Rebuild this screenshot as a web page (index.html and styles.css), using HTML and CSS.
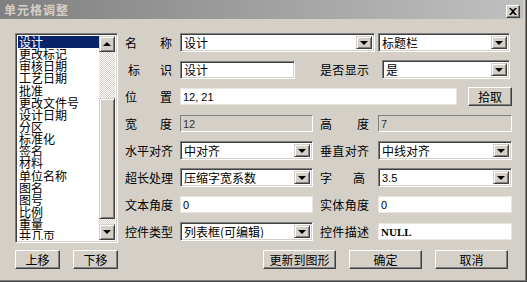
FILE: index.html
```html
<!DOCTYPE html>
<html lang="zh-CN">

<head>
    <meta charset="UTF-8">
    <meta name="viewport" content="width=device-width, initial-scale=1.0">
    <title>单元格调整</title>
    <link rel="stylesheet" href="styles.css">
</head>

<body>
    <div class="window">
        <div class="titlebar">
            <span class="title">单元格调整</span>
            <span class="close">
                <svg width="8" height="7" viewBox="0 0 8 7">
                    <path d="M0 0h2l2 2 2-2h2l-3 3.5 3 3.5h-2l-2-2-2 2h-2l3-3.5z" fill="#000"/>
                </svg>
            </span>
        </div>

        <div class="client">
            <div class="left">
                <div class="listbox">
                    <ul class="items">
                        <li class="selected">设计</li>
                        <li>更改标记</li>
                        <li>审核日期</li>
                        <li>工艺日期</li>
                        <li>批准</li>
                        <li>更改文件号</li>
                        <li>设计日期</li>
                        <li>分区</li>
                        <li>标准化</li>
                        <li>签名</li>
                        <li>材料</li>
                        <li>单位名称</li>
                        <li>图名</li>
                        <li>图号</li>
                        <li>比例</li>
                        <li>重量</li>
                        <li>共几页</li>
                        <li>第几页</li>
                    </ul>
                    <div class="scrollbar">
                        <div class="sb-btn"><span class="arrow-up"></span></div>
                        <div class="sb-track">
                            <div class="sb-thumb"></div>
                        </div>
                        <div class="sb-btn"><span class="arrow-down"></span></div>
                    </div>
                </div>
                <div class="left-buttons">
                    <button class="btn small">上移</button>
                    <button class="btn small">下移</button>
                </div>
            </div>

            <div class="form">
                <div class="row">
                    <label class="lbl">名称</label>
                    <div class="combo w-name"><span class="val">设计</span><span class="drop"><span class="arrow-down"></span></span></div>
                    <div class="combo w-type"><span class="val">标题栏</span><span class="drop"><span class="arrow-down"></span></span></div>
                </div>

                <div class="row">
                    <label class="lbl lbl-id">标识</label>
                    <div class="edit sunken w-id">设计</div>
                    <label class="lbl2 lbl-show">是否显示</label>
                    <div class="combo w-show"><span class="val">是</span><span class="drop"><span class="arrow-down"></span></span></div>
                </div>

                <div class="row">
                    <label class="lbl">位置</label>
                    <div class="edit w-pos latin">12, 21</div>
                    <button class="btn pick">拾取</button>
                </div>

                <div class="row">
                    <label class="lbl">宽度</label>
                    <div class="edit readonly w-half latin">12</div>
                    <label class="lbl2">高度</label>
                    <div class="edit readonly w-half2 latin">7</div>
                </div>

                <div class="row">
                    <label class="lbl">水平对齐</label>
                    <div class="combo w-half"><span class="val">中对齐</span><span class="drop"><span class="arrow-down"></span></span></div>
                    <label class="lbl2">垂直对齐</label>
                    <div class="combo w-half2"><span class="val">中线对齐</span><span class="drop"><span class="arrow-down"></span></span></div>
                </div>

                <div class="row">
                    <label class="lbl">超长处理</label>
                    <div class="combo w-half"><span class="val">压缩字宽系数</span><span class="drop"><span class="arrow-down"></span></span></div>
                    <label class="lbl2 lbl-wide">字高</label>
                    <div class="combo w-half2"><span class="val latin">3.5</span><span class="drop"><span class="arrow-down"></span></span></div>
                </div>

                <div class="row">
                    <label class="lbl">文本角度</label>
                    <div class="edit w-half latin">0</div>
                    <label class="lbl2">实体角度</label>
                    <div class="edit w-half2 latin">0</div>
                </div>

                <div class="row">
                    <label class="lbl">控件类型</label>
                    <div class="combo w-half"><span class="val">列表框(可编辑)</span><span class="drop"><span class="arrow-down"></span></span></div>
                    <label class="lbl2">控件描述</label>
                    <div class="edit w-half2 null">NULL</div>
                </div>

                <div class="actions">
                    <button class="btn wide">更新到图形</button>
                    <button class="btn wide">确定</button>
                    <button class="btn wide">取消</button>
                </div>
            </div>
        </div>
    </div>
</body>

</html>
```

FILE: styles.css
```css
body {
    margin: 0;
    font-family: "Noto Sans CJK SC", sans-serif;
    font-size: 12px;
}

.window {
    width: 527px;
    height: 282px;
    box-sizing: border-box;
    background: #d4d0c8;
    padding: 0 4px 4px 0;
    box-shadow: inset -1px -1px #404040, inset -2px -2px #808080;
    overflow: hidden;
}

.titlebar {
    height: 19px;
    display: flex;
    align-items: center;
    justify-content: space-between;
    padding: 0 3px 0 4px;
    background: linear-gradient(to right, #808080, #c0c0c0);
}

.title {
    color: #d4d0c8;
    font-weight: bold;
    font-size: 12px;
    letter-spacing: 1px;
}

.close {
    width: 14px;
    height: 13px;
    box-sizing: border-box;
    display: flex;
    align-items: center;
    justify-content: center;
    background: #d4d0c8;
    border: 1px solid;
    border-color: #fff #404040 #404040 #fff;
    box-shadow: inset -1px -1px #808080;
    margin-top: 4px;
}

.client {
    display: flex;
    padding: 14px 0 0 15px;
}

/* left list */
.left {
    width: 103px;
}

.listbox {
    height: 210px;
    box-sizing: border-box;
    display: flex;
    background: #fff;
    border: 1px solid;
    border-color: #808080 #fff #fff #808080;
    box-shadow: inset 1px 1px #404040, inset -1px -1px #d4d0c8;
    padding: 2px;
    overflow: hidden;
}

.items {
    list-style: none;
    margin: 0;
    padding: 0;
    flex: 1;
    overflow: hidden;
    line-height: 12.15px;
}

.items li {
    padding-left: 1px;
    height: 12.15px;
    white-space: nowrap;
}

.items .selected {
    background: #0a246a;
    color: #fff;
}

.scrollbar {
    width: 16px;
    display: flex;
    flex-direction: column;
}

.sb-btn {
    height: 16px;
    box-sizing: border-box;
    background: #d4d0c8;
    border: 1px solid;
    border-color: #d4d0c8 #404040 #404040 #d4d0c8;
    box-shadow: inset 1px 1px #fff, inset -1px -1px #808080;
    display: flex;
    align-items: center;
    justify-content: center;
}

.sb-track {
    flex: 1;
    background: repeating-conic-gradient(#fff 0 25%, #d4d0c8 0 50%) 0 0 / 2px 2px;
    padding-top: 46px;
}

.sb-thumb {
    height: 121px;
    box-sizing: border-box;
    background: #d4d0c8;
    border: 1px solid;
    border-color: #d4d0c8 #404040 #404040 #d4d0c8;
    box-shadow: inset 1px 1px #fff, inset -1px -1px #808080;
}

.arrow-up,
.arrow-down {
    width: 0;
    height: 0;
    border-left: 4px solid transparent;
    border-right: 4px solid transparent;
}

.arrow-up {
    border-bottom: 4px solid #000;
}

.arrow-down {
    border-top: 4px solid #000;
}

.left-buttons {
    display: flex;
    justify-content: space-between;
    margin-top: 7px;
}

/* buttons */
.btn {
    font-family: "Noto Sans CJK SC", sans-serif;
    font-size: 12px;
    line-height: 1;
    height: 19px;
    padding: 0;
    background: #d4d0c8;
    color: #000;
    border: 1px solid;
    border-color: #fff #404040 #404040 #fff;
    box-shadow: inset -1px -1px #808080;
}

.btn.small {
    width: 45px;
}

.btn.wide {
    width: 73px;
}

.btn.pick {
    width: 44px;
    margin-left: 11px;
}

/* form */
.form {
    margin-left: 5px;
    margin-top: -4px;
    width: 389px;
}

.row {
    height: 27px;
    display: flex;
    align-items: center;
}

.lbl {
    width: 57px;
    flex-shrink: 0;
    box-sizing: border-box;
    padding: 0 8px 0 2px;
    white-space: nowrap;
    text-align: justify;
    text-align-last: justify;
}

.lbl-id {
    padding-left: 5px;
}

.lbl2 {
    width: 58px;
    flex-shrink: 0;
    box-sizing: border-box;
    margin-left: 7px;
    padding-right: 9px;
    white-space: nowrap;
    text-align: justify;
    text-align-last: justify;
}

.lbl2.lbl-wide {
    padding-right: 13px;
}

.lbl-show {
    margin-left: 25px;
    width: 62px;
    padding-right: 13px;
}

.latin {
    font-family: "Liberation Sans", sans-serif;
    font-size: 11px;
}

.null {
    font-family: "Liberation Serif", serif;
    font-weight: bold;
    font-size: 11px;
}

.edit {
    height: 17px;
    flex-shrink: 0;
    box-sizing: border-box;
    background: #fff;
    border: 1px solid #e8e6e0;
    padding: 0 2px;
    display: flex;
    align-items: center;
    white-space: nowrap;
    overflow: hidden;
}

.edit.sunken {
    height: 18px;
    border-color: #808080 #fff #fff #808080;
    box-shadow: inset 1px 1px #404040, inset -1px -1px #d4d0c8;
    padding-left: 3px;
}

.edit.readonly {
    background: #d4d0c8;
    border-color: #808080 #fff #fff #808080;
    color: #333;
}

.combo {
    height: 19px;
    flex-shrink: 0;
    box-sizing: border-box;
    display: flex;
    background: #fff;
    border: 1px solid;
    border-color: #808080 #fff #fff #808080;
    box-shadow: inset 1px 1px #404040, inset -1px -1px #d4d0c8;
    padding: 2px;
}

.combo .val {
    flex: 1;
    display: flex;
    align-items: center;
    padding-left: 1px;
    white-space: nowrap;
    overflow: hidden;
}

.drop {
    width: 16px;
    box-sizing: border-box;
    background: #d4d0c8;
    border: 1px solid;
    border-color: #d4d0c8 #404040 #404040 #d4d0c8;
    box-shadow: inset 1px 1px #fff, inset -1px -1px #808080;
    display: flex;
    align-items: center;
    justify-content: center;
}

.w-name {
    width: 195px;
}

.w-type {
    width: 132px;
    margin-left: 3px;
}

.w-id {
    width: 115px;
}

.w-show {
    width: 128px;
}

.w-pos {
    width: 277px;
}

.w-half {
    width: 133px;
}

.w-half2 {
    width: 134px;
}

.actions {
    display: flex;
    justify-content: flex-end;
    gap: 13px;
    margin-top: 5px;
    padding-right: 4px;
}
```
